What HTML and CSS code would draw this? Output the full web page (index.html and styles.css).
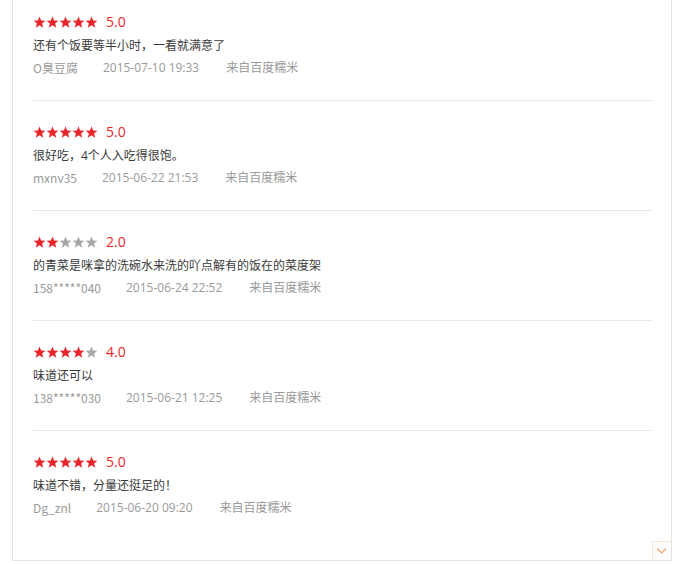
FILE: index.html
```html
<!DOCTYPE html>
<html lang="zh-CN">
<head>
<meta charset="utf-8">
<link rel="stylesheet" href="styles.css">
</head>
<body>
<svg width="0" height="0" class="defs">
  <defs>
    <path id="star" d="M6.5 0.6 L8.1 4.6 L12.4 4.8 L9.1 7.5 L10.2 11.7 L6.5 9.3 L2.8 11.7 L3.9 7.5 L0.6 4.8 L4.9 4.6 Z"/>
  </defs>
</svg>
<div class="panel">
  <div class="review">
    <div class="rating">
      <span class="stars">
        <svg class="star on" viewBox="0 0 13 12"><use href="#star"/></svg><svg class="star on" viewBox="0 0 13 12"><use href="#star"/></svg><svg class="star on" viewBox="0 0 13 12"><use href="#star"/></svg><svg class="star on" viewBox="0 0 13 12"><use href="#star"/></svg><svg class="star on" viewBox="0 0 13 12"><use href="#star"/></svg>
      </span>
      <span class="score">5.0</span>
    </div>
    <p class="comment">还有个饭要等半小时，一看就满意了</p>
    <div class="meta"><span class="user">O臭豆腐</span><span class="time">2015-07-10 19:33</span><span class="source">来自百度糯米</span></div>
  </div>
  <div class="review">
    <div class="rating">
      <span class="stars">
        <svg class="star on" viewBox="0 0 13 12"><use href="#star"/></svg><svg class="star on" viewBox="0 0 13 12"><use href="#star"/></svg><svg class="star on" viewBox="0 0 13 12"><use href="#star"/></svg><svg class="star on" viewBox="0 0 13 12"><use href="#star"/></svg><svg class="star on" viewBox="0 0 13 12"><use href="#star"/></svg>
      </span>
      <span class="score">5.0</span>
    </div>
    <p class="comment">很好吃，4个人入吃得很饱。</p>
    <div class="meta"><span class="user">mxnv35</span><span class="time">2015-06-22 21:53</span><span class="source">来自百度糯米</span></div>
  </div>
  <div class="review">
    <div class="rating">
      <span class="stars">
        <svg class="star on" viewBox="0 0 13 12"><use href="#star"/></svg><svg class="star on" viewBox="0 0 13 12"><use href="#star"/></svg><svg class="star off" viewBox="0 0 13 12"><use href="#star"/></svg><svg class="star off" viewBox="0 0 13 12"><use href="#star"/></svg><svg class="star off" viewBox="0 0 13 12"><use href="#star"/></svg>
      </span>
      <span class="score">2.0</span>
    </div>
    <p class="comment">的青菜是咪拿的洗碗水来洗的吖点解有的饭在的菜度架</p>
    <div class="meta"><span class="user">158*****040</span><span class="time">2015-06-24 22:52</span><span class="source">来自百度糯米</span></div>
  </div>
  <div class="review">
    <div class="rating">
      <span class="stars">
        <svg class="star on" viewBox="0 0 13 12"><use href="#star"/></svg><svg class="star on" viewBox="0 0 13 12"><use href="#star"/></svg><svg class="star on" viewBox="0 0 13 12"><use href="#star"/></svg><svg class="star on" viewBox="0 0 13 12"><use href="#star"/></svg><svg class="star off" viewBox="0 0 13 12"><use href="#star"/></svg>
      </span>
      <span class="score">4.0</span>
    </div>
    <p class="comment">味道还可以</p>
    <div class="meta"><span class="user">138*****030</span><span class="time">2015-06-21 12:25</span><span class="source">来自百度糯米</span></div>
  </div>
  <div class="review">
    <div class="rating">
      <span class="stars">
        <svg class="star on" viewBox="0 0 13 12"><use href="#star"/></svg><svg class="star on" viewBox="0 0 13 12"><use href="#star"/></svg><svg class="star on" viewBox="0 0 13 12"><use href="#star"/></svg><svg class="star on" viewBox="0 0 13 12"><use href="#star"/></svg><svg class="star on" viewBox="0 0 13 12"><use href="#star"/></svg>
      </span>
      <span class="score">5.0</span>
    </div>
    <p class="comment">味道不错，分量还挺足的！</p>
    <div class="meta"><span class="user">Dg_znl</span><span class="time">2015-06-20 09:20</span><span class="source">来自百度糯米</span></div>
  </div>
  <a class="more" href="#" aria-label="更多">
    <svg viewBox="0 0 19 19" width="19" height="19"><path d="M5 7.5 L9.5 12 L14 7.5" fill="none" stroke="#f0a46c" stroke-width="1.2"/></svg>
  </a>
</div>
</body>
</html>
```

FILE: styles.css
```css
html, body {
  margin: 0;
  padding: 0;
  background: #fff;
}
body {
  font-family: "Open Sans", "Noto Sans CJK SC", sans-serif;
  font-size: 12px;
  color: #333;
}
.defs {
  position: absolute;
  width: 0;
  height: 0;
}
.panel {
  position: relative;
  box-sizing: border-box;
  width: 660px;
  margin: -9px 0 0 12px;
  padding: 0 19px 42px 20px;
  border: 1px solid #e3e3e3;
  border-top: none;
}
.review {
  padding: 21px 0 22px;
  border-bottom: 1px solid #e8e8e8;
}
.review:last-of-type {
  border-bottom: none;
  padding-bottom: 0;
}
.rating {
  display: flex;
  align-items: center;
  height: 20px;
}
.stars {
  display: flex;
  align-items: center;
}
.star {
  width: 13px;
  height: 12px;
  display: block;
}
.star.on { fill: #e8262a; }
.star.off { fill: #a8a8a8; }
.score {
  margin-left: 8px;
  font-size: 14px;
  line-height: 20px;
  color: #e8262a;
}
.comment {
  margin: 4px 0 0;
  line-height: 20px;
  color: #3a3a3a;
}
.meta {
  margin-top: 2px;
  line-height: 20px;
  color: #9a9a9a;
  display: flex;
  gap: 25px;
}
.user {
  font-family: "Noto Sans CJK SC", sans-serif;
}
.time {
  margin-right: 2px;
}
.more {
  position: absolute;
  right: 0;
  bottom: 0;
  width: 19px;
  height: 19px;
  box-sizing: border-box;
  border-top: 1px solid #f6e6da;
  border-left: 1px solid #f6e6da;
  background: #fffdfb;
  display: block;
}
.more svg {
  display: block;
  margin: -1px 0 0 -1px;
}
```
